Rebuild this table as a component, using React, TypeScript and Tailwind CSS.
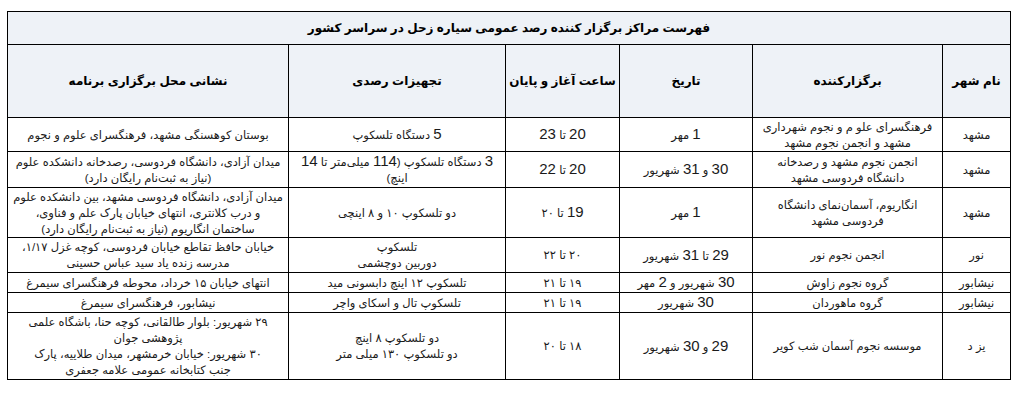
import React from "react";

type Row = {
  city: string;
  org: string[];
  date: string[];
  hours: string[];
  gear: string[];
  addr: string[];
  h: string;
};

const rows: Row[] = [
  {
    city: "مشهد",
    org: ["فرهنگسرای علو م و نجوم شهرداری", "مشهد و انجمن نجوم مشهد"],
    date: ["1 مهر"],
    hours: ["20 تا 23"],
    gear: ["5 دستگاه تلسکوپ"],
    addr: ["بوستان کوهسنگی مشهد، فرهنگسرای علوم و نجوم"],
    h: "h-[34px]",
  },
  {
    city: "مشهد",
    org: ["انجمن نجوم مشهد و رصدخانه", "دانشگاه فردوسی مشهد"],
    date: ["30 و 31 شهریور"],
    hours: ["20 تا 22"],
    gear: ["3 دستگاه تلسکوپ (114 میلی‌متر تا 14", "اینچ)"],
    addr: ["میدان آزادی، دانشگاه فردوسی، رصدخانه دانشکده علوم", "(نیاز به ثبت‌نام رایگان دارد)"],
    h: "h-[36px]",
  },
  {
    city: "مشهد",
    org: ["انگاریوم، آسمان‌نمای دانشگاه", "فردوسی مشهد"],
    date: ["1 مهر"],
    hours: ["19 تا ۲۰"],
    gear: ["دو تلسکوپ ۱۰ و ۸ اینچی"],
    addr: [
      "میدان آزادی، دانشگاه فردوسی مشهد، بین دانشکده علوم",
      "و درب کلانتری، انتهای خیابان پارک علم و فناوی،",
      "ساختمان انگاریوم (نیاز به ثبت‌نام رایگان دارد)",
    ],
    h: "h-[50px]",
  },
  {
    city: "نور",
    org: ["انجمن نجوم نور"],
    date: ["29 تا 31 شهریور"],
    hours: ["۲۰ تا ۲۲"],
    gear: ["تلسکوپ", "دوربین دوچشمی"],
    addr: ["خیابان حافظ تقاطع خیابان فردوسی، کوچه غزل ۱/۱۷،", "مدرسه زنده یاد سید عباس حسینی"],
    h: "h-[35px]",
  },
  {
    city: "نیشابور",
    org: ["گروه نجوم زاوش"],
    date: ["30 شهریور و 2 مهر"],
    hours: ["۱۹ تا ۲۱"],
    gear: ["تلسکوپ ۱۲ اینچ دابسونی مید"],
    addr: ["انتهای خیابان ۱۵ خرداد، محوطه فرهنگسرای سیمرغ"],
    h: "h-[20px]",
  },
  {
    city: "نیشابور",
    org: ["گروه ماهوردان"],
    date: ["30 شهریور"],
    hours: ["۱۹ تا ۲۱"],
    gear: ["تلسکوپ تال و اسکای واچر"],
    addr: ["نیشابور، فرهنگسرای سیمرغ"],
    h: "h-[20px]",
  },
  {
    city: "یز د",
    org: ["موسسه نجوم آسمان شب کویر"],
    date: ["29 و 30 شهریور"],
    hours: ["۱۸ تا ۲۰"],
    gear: ["دو تلسکوپ ۸ اینچ", "دو تلسکوپ ۱۳۰ میلی متر"],
    addr: [
      "۲۹ شهریور: بلوار طالقانی، کوچه حنا، باشگاه علمی",
      "پژوهشی جوان",
      "۳۰ شهریور: خیابان خرمشهر، میدان طلاییه، پارک",
      "جنب کتابخانه عمومی علامه جعفری",
    ],
    h: "h-[67px]",
  },
];

// latin digits are a size up in the source sheet
function Txt({ s }: { s: string }) {
  const parts = s.split(/([0-9]+)/);
  return (
    <>
      {parts.map((p, i) =>
        /^[0-9]+$/.test(p) ? (
          <span key={i} className="text-[15px]">
            {p}
          </span>
        ) : (
          <React.Fragment key={i}>{p}</React.Fragment>
        )
      )}
    </>
  );
}

function Lines({ lines }: { lines: string[] }) {
  return (
    <>
      {lines.map((l, i) => (
        <div key={i} className="whitespace-nowrap">
          <Txt s={l} />
        </div>
      ))}
    </>
  );
}

const cell = "overflow-hidden border border-black p-0 text-center align-middle leading-[16px]";
const head =
  "whitespace-nowrap border border-black bg-[#eef2f7] p-0 text-center align-middle text-[12px] font-bold text-black";

export default function App() {
  return (
    <div className="min-h-[404px] w-[1023px] bg-white pl-[7px] pt-[11px] font-['Liberation_Sans','DejaVu_Sans',sans-serif] text-[11.5px] text-[#1a1a1a]">
      <table dir="rtl" className="w-[1003px] table-fixed border-collapse">
        <colgroup>
          <col className="w-[68px]" />
          <col className="w-[190px]" />
          <col className="w-[133px]" />
          <col className="w-[114px]" />
          <col className="w-[217px]" />
          <col className="w-[281px]" />
        </colgroup>
        <thead>
          <tr className="h-[33px]">
            <th colSpan={6} className={head + " text-[12.5px]"}>
              فهرست مراکز برگزار کننده رصد عمومی سیاره زحل در سراسر کشور
            </th>
          </tr>
          <tr className="h-[73px]">
            <th className={head}>نام شهر</th>
            <th className={head}>برگزارکننده</th>
            <th className={head}>تاریخ</th>
            <th className={head}>ساعت آغاز و پایان</th>
            <th className={head}>تجهیزات رصدی</th>
            <th className={head}>نشانی محل برگزاری برنامه</th>
          </tr>
        </thead>
        <tbody>
          {rows.map((r, i) => (
            <tr key={i} className={r.h}>
              <td className={cell}>{r.city}</td>
              <td className={cell}>
                <Lines lines={r.org} />
              </td>
              <td className={cell}>
                <Lines lines={r.date} />
              </td>
              <td className={cell}>
                <Lines lines={r.hours} />
              </td>
              <td className={cell}>
                <Lines lines={r.gear} />
              </td>
              <td className={cell}>
                <Lines lines={r.addr} />
              </td>
            </tr>
          ))}
        </tbody>
      </table>
    </div>
  );
}
